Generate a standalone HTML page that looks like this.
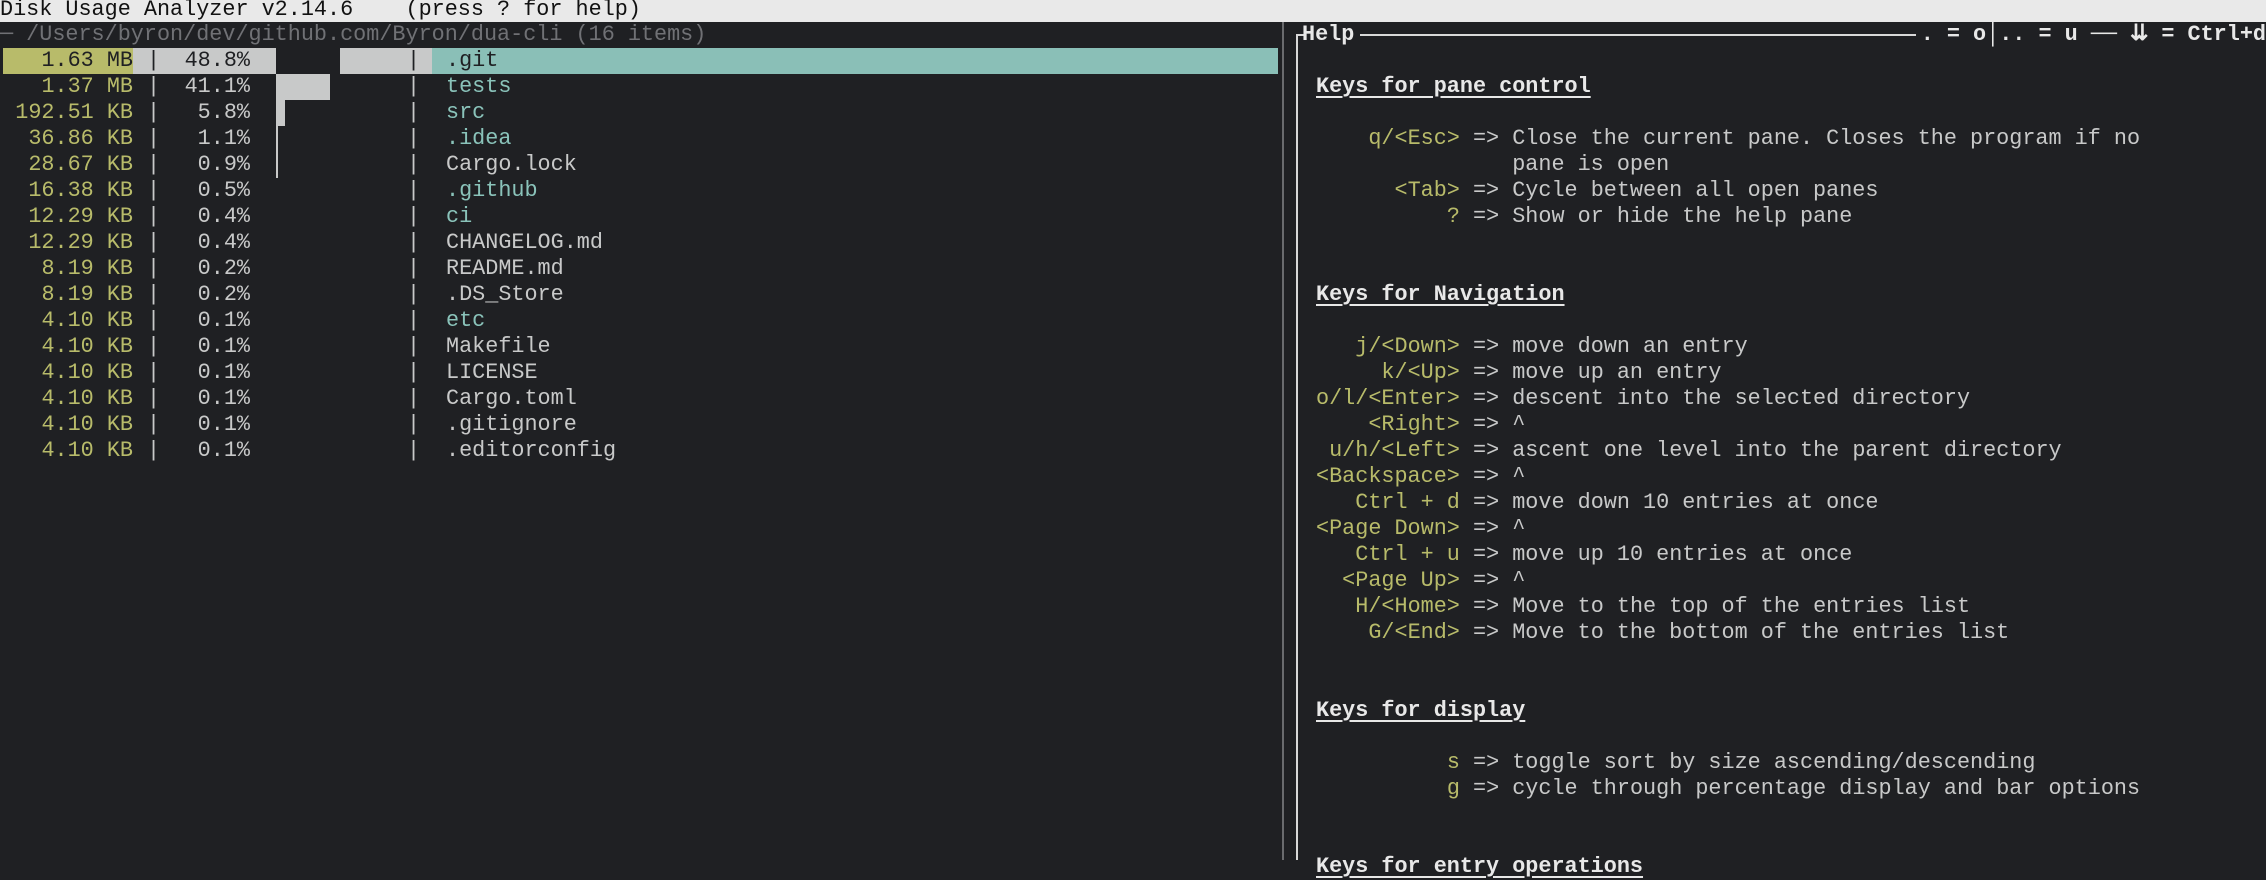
<!DOCTYPE html>
<html><head><meta charset="utf-8"><style>
*{margin:0;padding:0;box-sizing:border-box}
body{width:2266px;height:860px;overflow:hidden;background:#1f2023;font-family:"Liberation Mono",monospace;font-size:21.8px;color:#c8c9c9;position:relative}
.a{position:absolute;white-space:pre;line-height:26px;height:26px}
.y{color:#b8bb6a}.t{color:#8ac3ba}.w{color:#e6e6e6}
.r{text-align:right}
.b{font-weight:bold;color:#e8e8e8}
.u{text-decoration:underline;text-underline-offset:4px}
</style></head><body>
<div class="a" style="left:0;top:0;width:2266px;height:22px;background:#e9e9e9"></div>
<div class="a" style="left:0;top:-3px;color:#111;background:#e9e9e9;height:24px">Disk Usage Analyzer v2.14.6    (press ? for help)</div>
<div class="a" style="left:0;top:22px;color:#707175">─ /Users/byron/dev/github.com/Byron/dua-cli (16 items) </div>
<div style="position:absolute;left:1282px;top:22px;width:2px;height:838px;background:#6a6b6e"></div>
<div style="position:absolute;left:1296px;top:35px;width:2px;height:825px;background:#d8d8d8"></div>
<div style="position:absolute;left:1296px;top:34px;width:8px;height:2px;background:#d8d8d8"></div>
<div class="a b" style="left:1302px;top:22px">Help</div>
<div style="position:absolute;left:1360px;top:34px;width:556px;height:2px;background:#d8d8d8"></div>
<div class="a b r" style="right:0;top:22px">. = o│.. = u ── ⇊ = Ctrl+d</div>
<!-- selected row -->
<div style="position:absolute;left:3px;top:48px;width:130px;height:26px;background:#b8bb6a"></div>
<div style="position:absolute;left:133px;top:48px;width:143px;height:26px;background:#c8c9c9"></div>
<div style="position:absolute;left:340px;top:48px;width:92px;height:26px;background:#c8c9c9"></div>
<div style="position:absolute;left:432px;top:48px;width:846px;height:26px;background:#8abfb7"></div>
<div class="a r" style="left:0;width:133px;top:48px;color:#1f2023">1.63 MB</div>
<div class="a" style="left:147px;top:48px;color:#1f2023">|</div>
<div class="a r" style="left:160px;width:90px;top:48px;color:#1f2023">48.8%</div>
<div class="a" style="left:407px;top:48px;color:#1f2023">|</div>
<div class="a" style="left:446px;top:48px;color:#1f2023">.git</div>
<!-- bars -->
<div style="position:absolute;left:276px;top:74px;width:54px;height:26px;background:#c8c9c9"></div>
<div style="position:absolute;left:276px;top:100px;width:9px;height:26px;background:#c8c9c9"></div>
<div style="position:absolute;left:276px;top:126px;width:2px;height:52px;background:#c8c9c9"></div>
<div id="rows"></div>
<script>
var d=[["1.37 MB","41.1%","tests",1],["192.51 KB","5.8%","src",1],["36.86 KB","1.1%",".idea",1],["28.67 KB","0.9%","Cargo.lock",0],["16.38 KB","0.5%",".github",1],["12.29 KB","0.4%","ci",1],["12.29 KB","0.4%","CHANGELOG.md",0],["8.19 KB","0.2%","README.md",0],["8.19 KB","0.2%",".DS_Store",0],["4.10 KB","0.1%","etc",1],["4.10 KB","0.1%","Makefile",0],["4.10 KB","0.1%","LICENSE",0],["4.10 KB","0.1%","Cargo.toml",0],["4.10 KB","0.1%",".gitignore",0],["4.10 KB","0.1%",".editorconfig",0]];
var h="";d.forEach(function(r,i){var t=74+26*i;
h+='<div class="a r y" style="left:0;width:133px;top:'+t+'px">'+r[0]+'</div><div class="a" style="left:147px;top:'+t+'px">|</div><div class="a r" style="left:160px;width:90px;top:'+t+'px">'+r[1]+'</div><div class="a" style="left:407px;top:'+t+'px">|</div><div class="a '+(r[3]?'t':'')+'" style="left:446px;top:'+t+'px">'+r[2]+'</div>';});
var H=[[3,'<span class="b u">Keys for pane control</span>'],
[5,k('q/&lt;Esc&gt;','Close the current pane. Closes the program if no')],[6,'               pane is open'],
[7,k('&lt;Tab&gt;','Cycle between all open panes')],[8,k('?','Show or hide the help pane')],
[11,'<span class="b u">Keys for Navigation</span>'],
[13,k('j/&lt;Down&gt;','move down an entry')],[14,k('k/&lt;Up&gt;','move up an entry')],[15,k('o/l/&lt;Enter&gt;','descent into the selected directory')],[16,k('&lt;Right&gt;','^')],[17,k('u/h/&lt;Left&gt;','ascent one level into the parent directory')],[18,k('&lt;Backspace&gt;','^')],[19,k('Ctrl + d','move down 10 entries at once')],[20,k('&lt;Page Down&gt;','^')],[21,k('Ctrl + u','move up 10 entries at once')],[22,k('&lt;Page Up&gt;','^')],[23,k('H/&lt;Home&gt;','Move to the top of the entries list')],[24,k('G/&lt;End&gt;','Move to the bottom of the entries list')],
[27,'<span class="b u">Keys for display</span>'],[29,k('s','toggle sort by size ascending/descending')],[30,k('g','cycle through percentage display and bar options')],
[33,'<span class="b u">Keys for entry operations</span>']];
function k(a,b){var l=a.replace(/&lt;/g,'<').replace(/&gt;/g,'>').length;return ' '.repeat(Math.max(0,11-l))+'<span class="y">'+a+'</span> => '+b;}
H.forEach(function(x){h+='<div class="a" style="left:1316px;top:'+(22+26*(x[0]-1))+'px">'+x[1]+'</div>';});
document.getElementById('rows').innerHTML=h;
</script>
</body></html>
